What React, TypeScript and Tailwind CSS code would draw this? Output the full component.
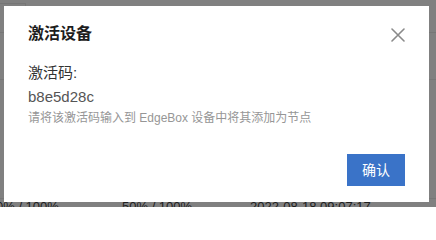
import React from "react";

const font = { fontFamily: '"Liberation Sans", "Noto Sans CJK SC", sans-serif' };

const Backdrop = () => {
  return (
    <div className="flex flex-col h-[207px]">
      <div className="h-[3px] shrink-0" />
      <div className="flex h-[30px] shrink-0 border-b border-[#767676]">
        <div className="w-[26px] border-r border-t border-[#767676]" />
      </div>
      <div className="h-[47px] shrink-0 border-b border-[#777]" />
      <div className="h-[119px] shrink-0 border-b border-[#777]" />
      <div className="flex shrink-0 h-[7px] text-[13px] text-[#1e1e1e] leading-[16px]">
        <span className="w-[126px] -ml-[4px]">0% / 100%</span>
        <span className="w-[128px]">50% / 100%</span>
        <span>2022-08-18 09:07:17</span>
      </div>
    </div>
  );
};

const App = () => {
  return (
    <div className="relative w-[436px] h-[207px] overflow-hidden bg-[#808080]" style={font}>
      <Backdrop />
      <div className="absolute left-[4px] top-[6px] w-[425px] h-[196px] bg-white flex flex-col px-6 pt-4 pb-4">
        <div className="flex items-center justify-between">
          <span className="text-[16px] leading-[24px] font-bold text-[#1d1d1d]">激活设备</span>
          <svg width="14" height="14" viewBox="0 0 14 14" className="mt-[1px]">
            <path d="M1 1L13 13M13 1L1 13" stroke="#8a8a8a" strokeWidth="1.6" strokeLinecap="round" />
          </svg>
        </div>
        <div className="mt-[15px] text-[15px] leading-[24px] text-[#333]">激活码:</div>
        <div className="text-[15px] leading-[24px] text-[#555]">b8e5d28c</div>
        <div className="text-[12px] leading-[18px] text-[#969696]">
          请将该激活码输入到 EdgeBox 设备中将其添加为节点
        </div>
        <div className="flex-1" />
        <div className="flex justify-end">
          <button className="w-[58px] h-[32px] bg-[#3a73c8] text-white text-[14px]">确认</button>
        </div>
      </div>
    </div>
  );
};

export default App;
